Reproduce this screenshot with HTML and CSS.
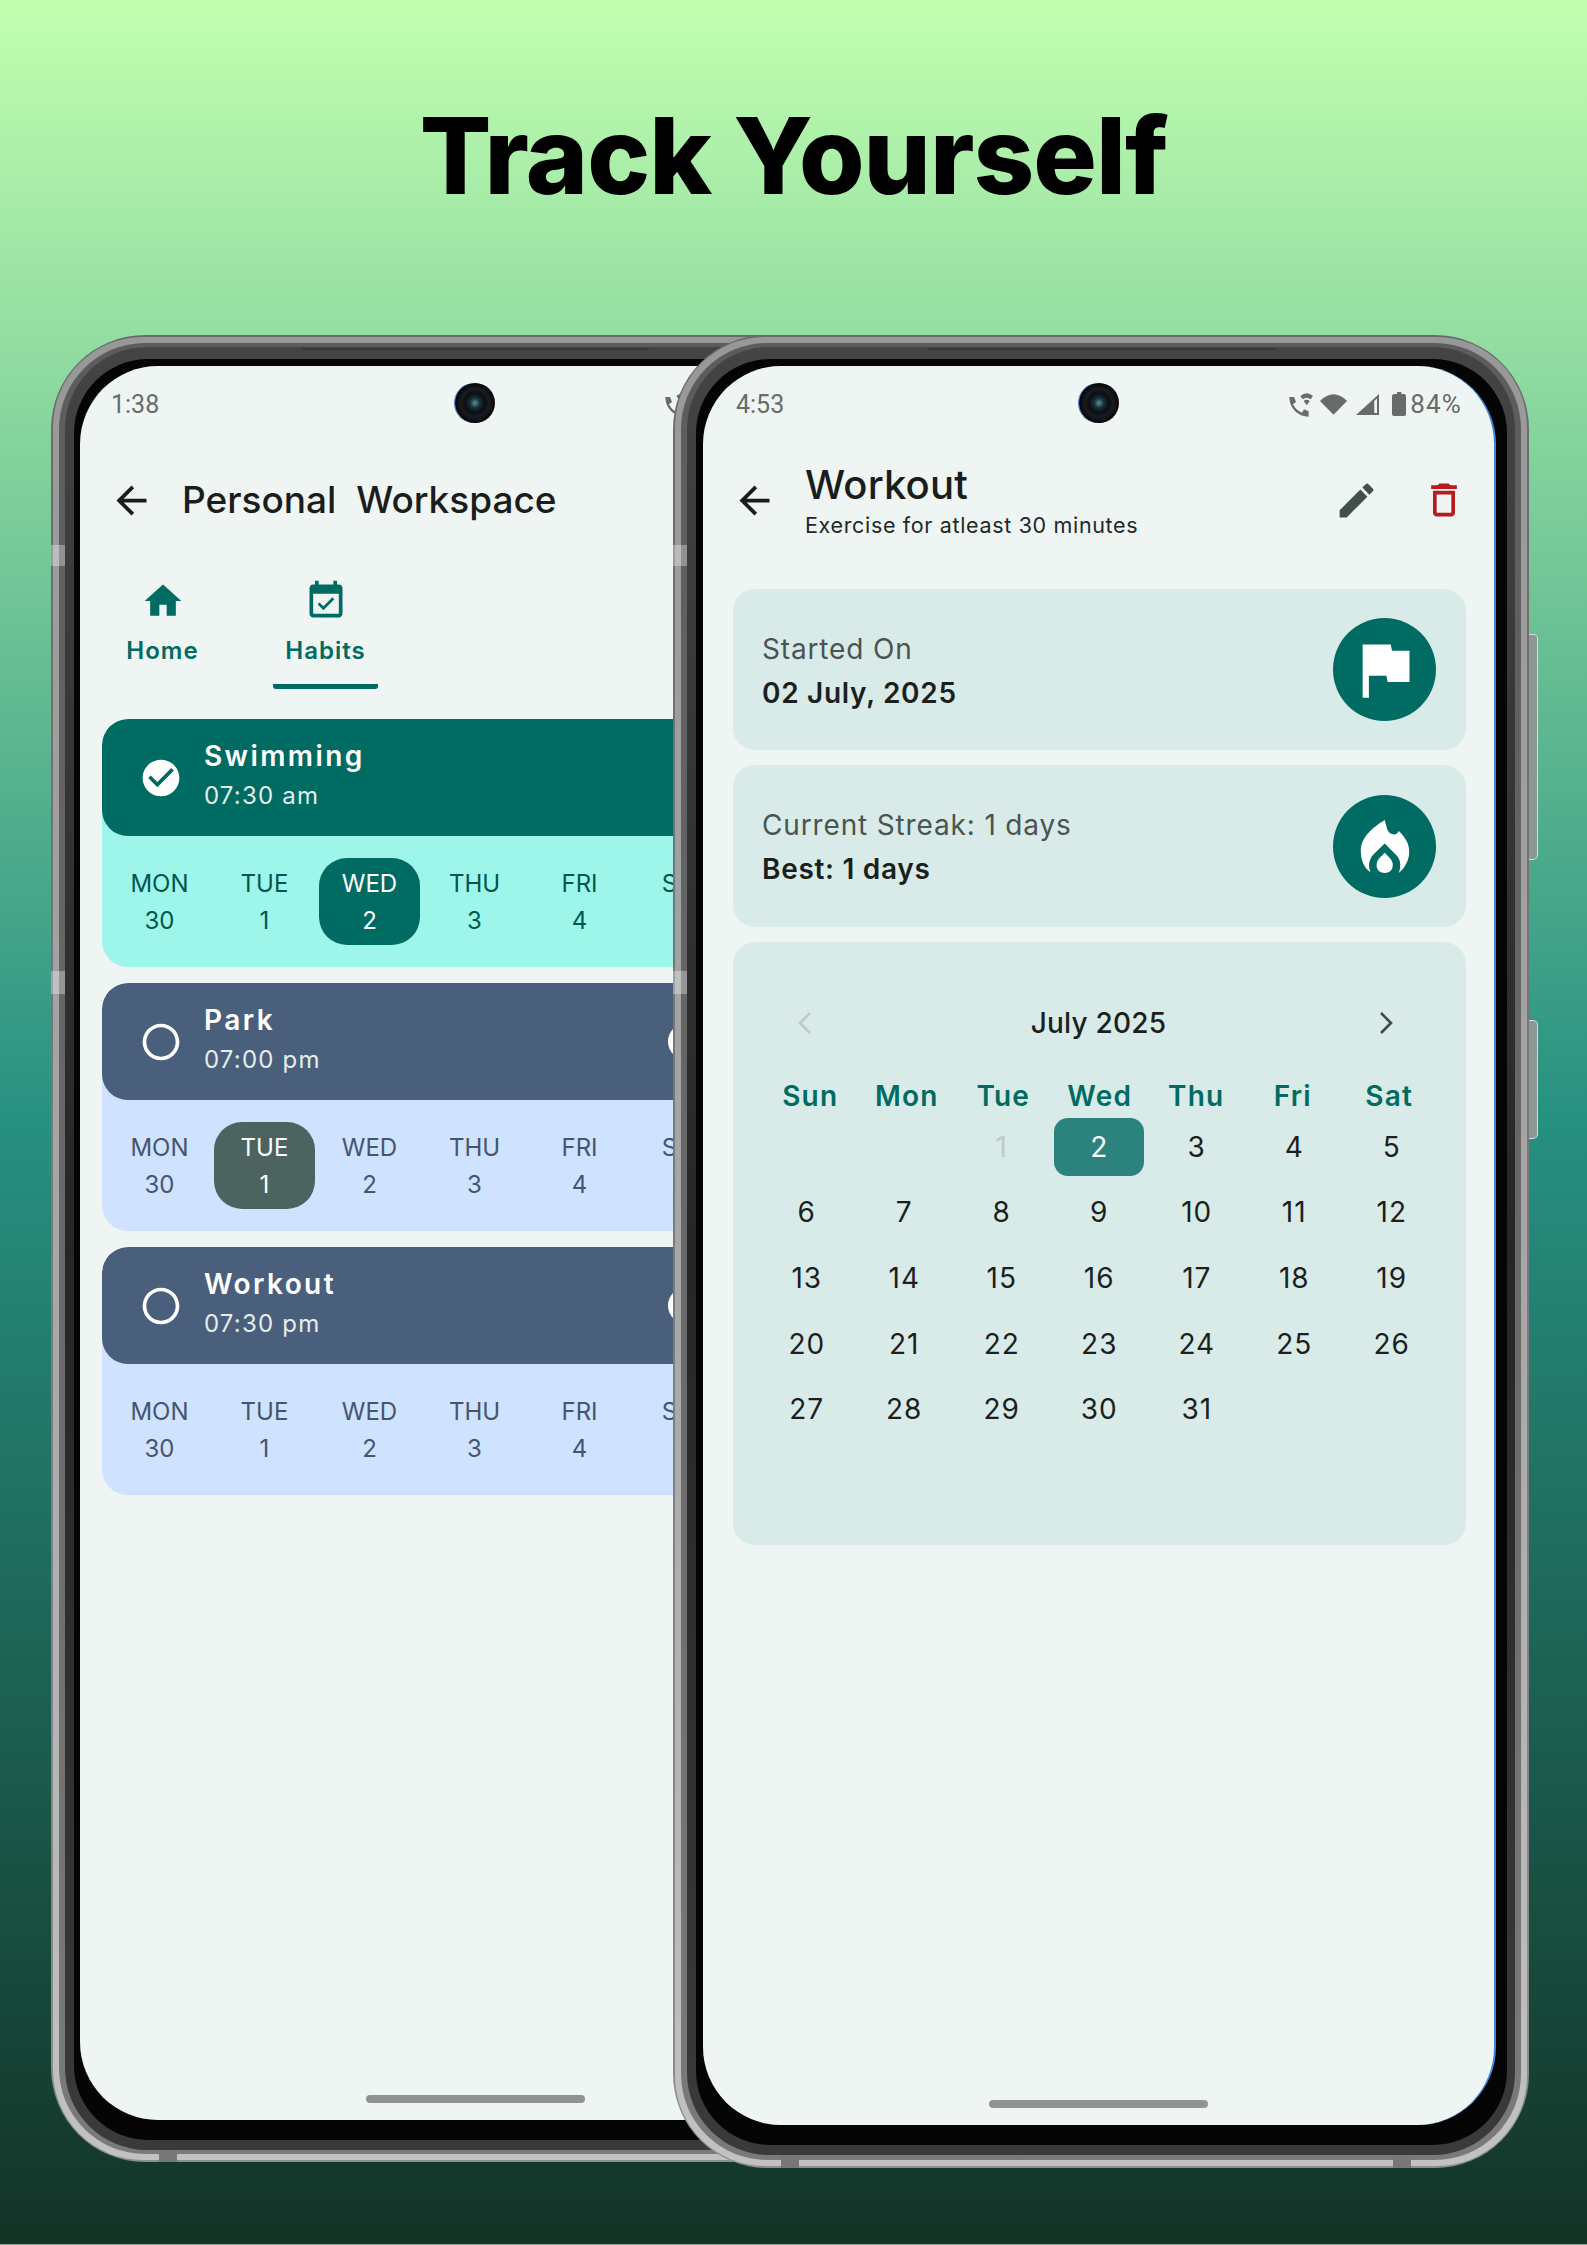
FILE: index.html
```html
<!DOCTYPE html>
<html lang="en">
<head>
    <meta charset="UTF-8">
    <meta name="viewport" content="width=device-width, initial-scale=1.0">
    <title>Track Yourself</title>
    <link rel="stylesheet" href="styles.css">
</head>
<body>
    <svg class="sprite" xmlns="http://www.w3.org/2000/svg">
        <symbol id="i-back" viewBox="0 0 24 24"><path d="M20 11H7.83l5.59-5.59L12 4l-8 8 8 8 1.41-1.41L7.83 13H20v-2z"/></symbol>
        <symbol id="i-home" viewBox="0 0 24 24"><path d="M10 20v-6h4v6h5v-8h3L12 3 2 12h3v8z"/></symbol>
        <symbol id="i-event" viewBox="0 0 24 24"><path d="M16.53 11.06L15.47 10l-4.88 4.88-2.12-2.12-1.06 1.06L10.59 17l5.94-5.94zM19 3h-1V1h-2v2H8V1H6v2H5c-1.11 0-1.99.9-1.99 2L3 19c0 1.1.89 2 2 2h14c1.1 0 2-.9 2-2V5c0-1.1-.9-2-2-2zm0 16H5V8h14v11z"/></symbol>
        <symbol id="i-done" viewBox="0 0 24 24"><path d="M12 2C6.48 2 2 6.48 2 12s4.48 10 10 10 10-4.48 10-10S17.52 2 12 2zm-2 15l-5-5 1.41-1.41L10 14.17l7.59-7.59L19 8l-9 9z"/></symbol>
        <symbol id="i-radio" viewBox="0 0 24 24"><path d="M12 2C6.48 2 2 6.48 2 12s4.48 10 10 10 10-4.48 10-10S17.52 2 12 2zm0 18c-4.42 0-8-3.58-8-8s3.58-8 8-8 8 3.58 8 8-3.58 8-8 8z"/></symbol>
        <symbol id="i-edit" viewBox="0 0 24 24"><path d="M3 17.25V21h3.75L17.81 9.94l-3.75-3.75L3 17.25zM20.71 7.04c.39-.39.39-1.02 0-1.41l-2.34-2.34c-.39-.39-1.02-.39-1.41 0l-1.83 1.83 3.75 3.75 1.83-1.83z"/></symbol>
        <symbol id="i-delete" viewBox="0 0 24 24"><path d="M16 9v10H8V9h8m-1.5-6h-5l-1 1H5v2h14V4h-3.5l-1-1zM18 7H6v12c0 1.1.9 2 2 2h8c1.1 0 2-.9 2-2V7z"/></symbol>
        <symbol id="i-flag" viewBox="0 0 24 24"><path d="M14.4 6L14 4H5v17h2v-7h5.6l.4 2h7V6z"/></symbol>
        <symbol id="i-fire" viewBox="180 675 152 168"><path d="M255 678C262 700 262 722 285 722C292 722 296 716 298 712C318 730 330 752 330 775C330 802 316 825 298 840C306 820 304 798 290 785L255 750L222 782C206 798 204 820 212 838C192 825 182 800 182 772C182 730 220 700 255 678Z"/><path d="M255 778L272 796C285 810 283 840 255 840C227 840 225 810 238 796Z"/></symbol>
        <symbol id="i-call" viewBox="0 0 75 75"><path d="M4 15H18L24 30L15 37C22 50 30 58 42 62L48 52L62 58V74C30 74 4 48 4 15Z"/><path d="M37 12Q56-4 75 12L68 22Q56 12 44 22Z"/><path d="M47 27Q56 20 65 27L56 40Z"/></symbol>
        <symbol id="i-wifi" viewBox="0 0 82 62"><path d="M0 20Q41-20 82 20L41 62Z"/></symbol>
        <symbol id="i-signal" viewBox="0 0 68 62"><path d="M68 0V62H0ZM62 13L54 21V56H62Z" fill-rule="evenodd"/></symbol>
        <symbol id="i-battery" viewBox="0 0 42 72"><path d="M15 0H28V6H36C39 6 42 9 42 12V66C42 69 39 72 36 72H6C3 72 0 69 0 66V12C0 9 3 6 6 6H15Z"/></symbol>
    </svg>

    <div class="page">
        <h1 class="headline">Track Yourself</h1>

        <div class="phones">
            <!-- habits list -->
            <div class="phone phone-left">
                <span class="rail-mark rail-mark-a"></span>
                <span class="rail-mark rail-mark-b"></span>
                <span class="foot-mark"></span>
                <div class="bezel">
                    <span class="speaker"></span>
                    <div class="glass">
                        <div class="screen">
                            <span class="camera"></span>
                            <div class="status-bar">
                                <span class="status-time">1:38</span>
                                <div class="status-icons">
                                    <svg class="ic-call"><use href="#i-call"/></svg>
                                    <svg class="ic-wifi"><use href="#i-wifi"/></svg>
                                    <svg class="ic-signal"><use href="#i-signal"/></svg>
                                    <svg class="ic-battery"><use href="#i-battery"/></svg>
                                    <span class="status-level">84%</span>
                                </div>
                            </div>
                            <div class="app-bar">
                                <svg class="back-icon"><use href="#i-back"/></svg>
                                <div class="app-bar-title">Personal&nbsp; Workspace</div>
                            </div>
                            <div class="tabs">
                                <div class="tab">
                                    <svg class="tab-icon"><use href="#i-home"/></svg>
                                    <span class="tab-label">Home</span>
                                </div>
                                <div class="tab tab-active">
                                    <svg class="tab-icon"><use href="#i-event"/></svg>
                                    <span class="tab-label">Habits</span>
                                </div>
                            </div>
                            <div class="habits">
                                <div class="habit habit-done">
                                    <div class="habit-head">
                                        <svg class="habit-check"><use href="#i-done"/></svg>
                                        <div class="habit-text">
                                            <div class="habit-name">Swimming</div>
                                            <div class="habit-time">07:30 am</div>
                                        </div>
                                    </div>
                                    <div class="week">
                                        <div class="day"><span>MON</span><span>30</span></div>
                                        <div class="day"><span>TUE</span><span>1</span></div>
                                        <div class="day day-on"><span>WED</span><span>2</span></div>
                                        <div class="day"><span>THU</span><span>3</span></div>
                                        <div class="day"><span>FRI</span><span>4</span></div>
                                        <div class="day"><span>SAT</span><span>5</span></div>
                                    </div>
                                </div>
                                <div class="habit">
                                    <div class="habit-head">
                                        <svg class="habit-check"><use href="#i-radio"/></svg>
                                        <div class="habit-text">
                                            <div class="habit-name">Park</div>
                                            <div class="habit-time">07:00 pm</div>
                                        </div>
                                        <span class="habit-dot"></span>
                                    </div>
                                    <div class="week">
                                        <div class="day"><span>MON</span><span>30</span></div>
                                        <div class="day day-missed"><span>TUE</span><span>1</span></div>
                                        <div class="day"><span>WED</span><span>2</span></div>
                                        <div class="day"><span>THU</span><span>3</span></div>
                                        <div class="day"><span>FRI</span><span>4</span></div>
                                        <div class="day"><span>SAT</span><span>5</span></div>
                                    </div>
                                </div>
                                <div class="habit">
                                    <div class="habit-head">
                                        <svg class="habit-check"><use href="#i-radio"/></svg>
                                        <div class="habit-text">
                                            <div class="habit-name">Workout</div>
                                            <div class="habit-time">07:30 pm</div>
                                        </div>
                                        <span class="habit-dot"></span>
                                    </div>
                                    <div class="week">
                                        <div class="day"><span>MON</span><span>30</span></div>
                                        <div class="day"><span>TUE</span><span>1</span></div>
                                        <div class="day"><span>WED</span><span>2</span></div>
                                        <div class="day"><span>THU</span><span>3</span></div>
                                        <div class="day"><span>FRI</span><span>4</span></div>
                                        <div class="day"><span>SAT</span><span>5</span></div>
                                    </div>
                                </div>
                            </div>
                            <span class="home-bar"></span>
                        </div>
                    </div>
                </div>
            </div>

            <!-- habit detail -->
            <div class="phone phone-right">
                <span class="side-key side-key-a"></span>
                <span class="side-key side-key-b"></span>
                <span class="rail-mark rail-mark-a"></span>
                <span class="rail-mark rail-mark-b"></span>
                <span class="foot-mark"></span>
                <span class="foot-mark foot-mark-end"></span>
                <div class="bezel">
                    <span class="speaker"></span>
                    <div class="glass">
                        <div class="screen">
                            <span class="camera"></span>
                            <div class="status-bar">
                                <span class="status-time">4:53</span>
                                <div class="status-icons">
                                    <svg class="ic-call"><use href="#i-call"/></svg>
                                    <svg class="ic-wifi"><use href="#i-wifi"/></svg>
                                    <svg class="ic-signal"><use href="#i-signal"/></svg>
                                    <svg class="ic-battery"><use href="#i-battery"/></svg>
                                    <span class="status-level">84%</span>
                                </div>
                            </div>
                            <div class="app-bar">
                                <svg class="back-icon"><use href="#i-back"/></svg>
                                <div class="detail-titles">
                                    <div class="detail-title">Workout</div>
                                    <div class="detail-sub">Exercise for atleast 30 minutes</div>
                                </div>
                                <svg class="edit-icon"><use href="#i-edit"/></svg>
                                <svg class="delete-icon"><use href="#i-delete"/></svg>
                            </div>
                            <div class="details">
                                <div class="stat">
                                    <div>
                                        <div class="stat-label">Started On</div>
                                        <div class="stat-value">02 July, 2025</div>
                                    </div>
                                    <div class="stat-badge"><svg class="flag-icon"><use href="#i-flag"/></svg></div>
                                </div>
                                <div class="stat stat-tall">
                                    <div>
                                        <div class="stat-label">Current Streak: 1 days</div>
                                        <div class="stat-value">Best: 1 days</div>
                                    </div>
                                    <div class="stat-badge"><svg class="fire-icon"><use href="#i-fire"/></svg></div>
                                </div>
                                <div class="calendar">
                                    <div class="cal-nav">
                                        <svg class="cal-arrow cal-arrow-off" viewBox="0 0 14 24"><path d="M12 2L2 12l10 10"/></svg>
                                        <span class="cal-month">July 2025</span>
                                        <svg class="cal-arrow" viewBox="0 0 14 24"><path d="M2 2l10 10L2 22"/></svg>
                                    </div>
                                    <div class="cal-weekdays">
                                        <span>Sun</span><span>Mon</span><span>Tue</span><span>Wed</span><span>Thu</span><span>Fri</span><span>Sat</span>
                                    </div>
                                    <div class="cal-dates">
                                        <span></span><span></span>
                                        <span class="date-off">1</span>
                                        <span class="date-on">2</span>
                                        <span>3</span><span>4</span><span>5</span>
                                        <span>6</span><span>7</span><span>8</span><span>9</span><span>10</span><span>11</span><span>12</span>
                                        <span>13</span><span>14</span><span>15</span><span>16</span><span>17</span><span>18</span><span>19</span>
                                        <span>20</span><span>21</span><span>22</span><span>23</span><span>24</span><span>25</span><span>26</span>
                                        <span>27</span><span>28</span><span>29</span><span>30</span><span>31</span>
                                    </div>
                                </div>
                            </div>
                            <span class="home-bar"></span>
                        </div>
                    </div>
                </div>
            </div>
        </div>
    </div>
</body>
</html>
```

FILE: styles.css
```css
* {
    box-sizing: border-box;
    margin: 0;
    padding: 0;
}
html, body {
    height: 100%;
}
body {
    font-family: Inter, "Liberation Sans", sans-serif;
    color: #1b1f1e;
    overflow: hidden;
}
svg {
    display: block;
    fill: currentColor;
    flex-shrink: 0;
}
.sprite {
    width: 0;
    height: 0;
    position: absolute;
}
.page {
    width: 1587px;
    height: 2245px;
    overflow: hidden;
    background: linear-gradient(180deg, #c2ffb0 0%, #279080 50%, #123326 100%);
    border-bottom: 1px solid #8fa39b;
}
.headline {
    height: 335px;
    padding-top: 91px;
    text-align: center;
    font-size: 106px;
    line-height: 130px;
    font-weight: 800;
    letter-spacing: -1px;
    color: #000;
}

/* phone shells */
.phones {
    display: flex;
    align-items: flex-start;
    padding-left: 51px;
}
.phone {
    position: relative;
    isolation: isolate;
    border-radius: 94px;
    background: linear-gradient(180deg, #6a6a6a 0%, #7c7c7c 55%, #8e8e8e 100%);
}
.phone::before,
.phone::after {
    content: "";
    position: absolute;
    border-radius: 90px;
}
.phone::before {
    inset: 2px;
    background: linear-gradient(180deg, #989898 0%, #a8a8a8 55%, #c2c2c2 100%);
}
.phone::after {
    inset: 8px;
    border-radius: 86px;
    background: linear-gradient(180deg, #5c5c5c 0%, #6a6a6a 55%, #7a7a7a 100%);
}
.phone-left {
    width: 847px;
    height: 1827px;
    padding: 12px 14px 12px 14px;
}
.phone-right {
    width: 856px;
    height: 1833px;
    margin-left: -225px;
    padding: 12px 14px 13px 14px;
}
.bezel {
    position: relative;
    z-index: 1;
    height: 100%;
    border-radius: 82px;
    padding: 12px 8px 10px 9px;
    background: linear-gradient(180deg, #444, #262626 50%, #3a3a3a);
}
.glass {
    height: 100%;
    border-radius: 74px;
    padding: 7px 6px 20px 6px;
    background: #050505;
}
.phone-right .glass {
    padding: 7px 11px 20px 7px;
}
.screen {
    position: relative;
    height: 100%;
    display: flex;
    flex-direction: column;
    border-radius: 78px;
    background: #eef5f2;
    overflow: hidden;
}
.phone-right .screen {
    border-right: 2px solid #3f86dc;
}
.speaker {
    position: absolute;
    top: 1px;
    left: 50%;
    width: 347px;
    height: 2px;
    margin-left: -173px;
    background: #3a3a3a;
}
.rail-mark {
    position: absolute;
    z-index: 1;
    left: 0;
    width: 14px;
    height: 21px;
    background: rgba(255, 255, 255, 0.32);
}
.rail-mark-a { top: 210px; }
.rail-mark-b { top: 636px; height: 23px; }
.foot-mark {
    position: absolute;
    z-index: 1;
    left: 108px;
    bottom: 0;
    width: 18px;
    height: 12px;
    background: #777;
}
.foot-mark-end {
    left: auto;
    right: 118px;
}
.side-key {
    position: absolute;
    left: 100%;
    width: 9px;
    border: 1px solid #d8dcdc;
    border-left: none;
    border-radius: 0 5px 5px 0;
    background: #8e9696;
}
.side-key-a { top: 299px; height: 226px; }
.side-key-b { top: 685px; height: 119px; }
.camera {
    position: absolute;
    top: 17px;
    left: 50%;
    width: 40px;
    height: 40px;
    margin-left: -20px;
    border-radius: 50%;
    background: radial-gradient(circle, #5d8f96 0, #16303a 5px, #0b0d10 10px, #1a1c20 14px, #050506 20px);
    box-shadow: -1px 0 0 #3d7fe0;
}

/* status bar */
.status-bar {
    flex-shrink: 0;
    display: flex;
    justify-content: space-between;
    align-items: center;
    height: 40px;
    margin-top: 18px;
    margin-bottom: -1px;
    padding: 0 32px 0 31px;
    font-family: Roboto, sans-serif;
    font-size: 25px;
    color: #676c6a;
}
.phone-right .status-time {
    margin-left: 2px;
}
.status-level {
    font-size: 26px;
    letter-spacing: 1.2px;
}
.status-icons {
    display: flex;
    align-items: center;
}
.ic-call { width: 25px; height: 25px; }
.ic-wifi { width: 27px; height: 21px; margin-left: 7px; }
.ic-signal { width: 23px; height: 21px; margin-left: 9px; }
.ic-battery { width: 14px; height: 24px; margin-left: 13px; margin-right: 4px; }

/* app bars */
.app-bar {
    flex-shrink: 0;
    display: flex;
    align-items: center;
    height: 60px;
    margin-top: 47px;
    padding-left: 29px;
    color: #1a1d1c;
}
.back-icon {
    width: 45px;
    height: 45px;
}
.app-bar-title {
    margin-left: 28px;
    margin-top: -2px;
    font-size: 37px;
    font-weight: 500;
    white-space: nowrap;
}
.detail-titles {
    margin-left: 28px;
    flex: 1;
}
.detail-title {
    font-size: 40px;
    line-height: 44px;
    font-weight: 500;
    letter-spacing: 0.2px;
    margin-top: 2px;
}
.detail-sub {
    font-size: 21.5px;
    line-height: 30px;
    margin-top: 3px;
    letter-spacing: 0.66px;
    color: #222827;
}
.edit-icon {
    width: 45px;
    height: 45px;
    color: #424f4b;
}
.delete-icon {
    width: 44px;
    height: 44px;
    margin: 0 28px 0 43px;
    color: #b71c1c;
}

/* tabs */
.tabs {
    flex-shrink: 0;
    display: flex;
    gap: 58px;
    margin-top: 49px;
    padding-left: 30px;
    color: #006b63;
}
.tab {
    width: 105px;
    height: 110px;
    display: flex;
    flex-direction: column;
    align-items: center;
    border-bottom: 5px solid transparent;
}
.tab-active {
    border-bottom-color: #006b63;
    border-radius: 0 0 3px 3px;
}
.tab-icon {
    width: 44px;
    height: 44px;
}
.tab-label {
    margin-top: 13px;
    font-size: 24px;
    line-height: 30px;
    font-weight: 600;
    letter-spacing: 1px;
}

/* habit cards */
.habits {
    flex-shrink: 0;
    display: flex;
    flex-direction: column;
    gap: 16px;
    margin: 30px 22px 0;
}
.habit {
    border-radius: 26px;
    overflow: hidden;
    background: #cfe2ff;
    color: #44566f;
}
.habit-done {
    background: #9ef5ea;
    color: #00574f;
}
.habit-head {
    display: flex;
    align-items: center;
    height: 117px;
    padding-left: 37px;
    border-radius: 26px;
    background: #4a5f7c;
    color: #fff;
}
.habit-done .habit-head {
    background: #006b63;
}
.habit-check {
    width: 44px;
    height: 44px;
}
.habit-text {
    margin-left: 21px;
    flex: 1;
    margin-top: -3px;
}
.habit-name {
    font-size: 28px;
    line-height: 40px;
    font-weight: 600;
    letter-spacing: 2.4px;
}
.habit-time {
    font-size: 24px;
    line-height: 40px;
    letter-spacing: 1.2px;
    color: #e3eeec;
}
.habit-dot {
    width: 37px;
    height: 37px;
    margin-right: 143px;
    border-radius: 50%;
    background: #fff;
}
.week {
    display: flex;
    padding: 22px 0 22px 5px;
}
.day {
    width: 101px;
    height: 87px;
    margin: 0 2px;
    padding-top: 7px;
    display: flex;
    flex-direction: column;
    align-items: center;
    border-radius: 28px;
    font-size: 24px;
    line-height: 37px;
}
.day-on {
    background: #006b63;
    color: #fff;
}
.day-missed {
    background: #4d6360;
    color: #fff;
}

/* detail cards */
.details {
    flex-shrink: 0;
    display: flex;
    flex-direction: column;
    gap: 15px;
    margin: 59px 28px 0 30px;
}
.stat {
    display: flex;
    align-items: center;
    justify-content: space-between;
    height: 161px;
    padding: 0 30px 0 29px;
    border-radius: 22px;
    background: #d9ebe8;
}
.stat-tall {
    height: 162px;
}
.stat-label {
    font-size: 28px;
    line-height: 44px;
    margin-top: 2px;
    letter-spacing: 0.85px;
    color: #4a5452;
}
.stat-value {
    font-size: 28px;
    line-height: 44px;
    font-weight: 600;
    letter-spacing: 0.7px;
    color: #1b1f1e;
}
.stat-badge {
    width: 103px;
    height: 103px;
    display: flex;
    align-items: center;
    justify-content: center;
    border-radius: 50%;
    background: #006b63;
    color: #fff;
}
.flag-icon {
    width: 75px;
    height: 75px;
}
.fire-icon {
    width: 50px;
    height: 55px;
}

/* calendar */
.calendar {
    height: 603px;
    padding-top: 57px;
    border-radius: 22px;
    background: #d9ebe8;
}
.cal-nav {
    display: flex;
    align-items: center;
    justify-content: space-between;
    height: 48px;
    padding: 0 73px 0 65px;
}
.cal-month {
    margin-left: 6px;
    font-size: 28px;
    font-weight: 500;
    letter-spacing: 0.2px;
}
.cal-arrow {
    width: 14px;
    height: 24px;
    fill: none;
    stroke: #3f4a48;
    stroke-width: 2.6;
}
.cal-arrow-off {
    stroke: #bccbc8;
}
.cal-weekdays {
    display: grid;
    grid-template-columns: repeat(7, 96.5px);
    margin-top: 31px;
    padding-left: 29px;
    font-size: 28px;
    line-height: 36px;
    font-weight: 600;
    letter-spacing: 1.2px;
    text-align: center;
    color: #006b63;
}
.cal-dates {
    display: grid;
    grid-template-columns: repeat(7, 97.5px);
    grid-auto-rows: 65.6px;
    padding-left: 25px;
    font-size: 28px;
    letter-spacing: 1px;
    text-align: center;
    align-items: center;
    justify-items: center;
    color: #1b1f1e;
}
.date-off {
    color: #bccbc8;
}
.date-on {
    width: 90px;
    height: 58px;
    line-height: 58px;
    border-radius: 14px;
    background: #2c837d;
    color: #fff;
}
.home-bar {
    flex-shrink: 0;
    align-self: center;
    width: 219px;
    height: 8px;
    margin-top: auto;
    margin-bottom: 17px;
    border-radius: 4px;
    background: #8f9491;
}
```
